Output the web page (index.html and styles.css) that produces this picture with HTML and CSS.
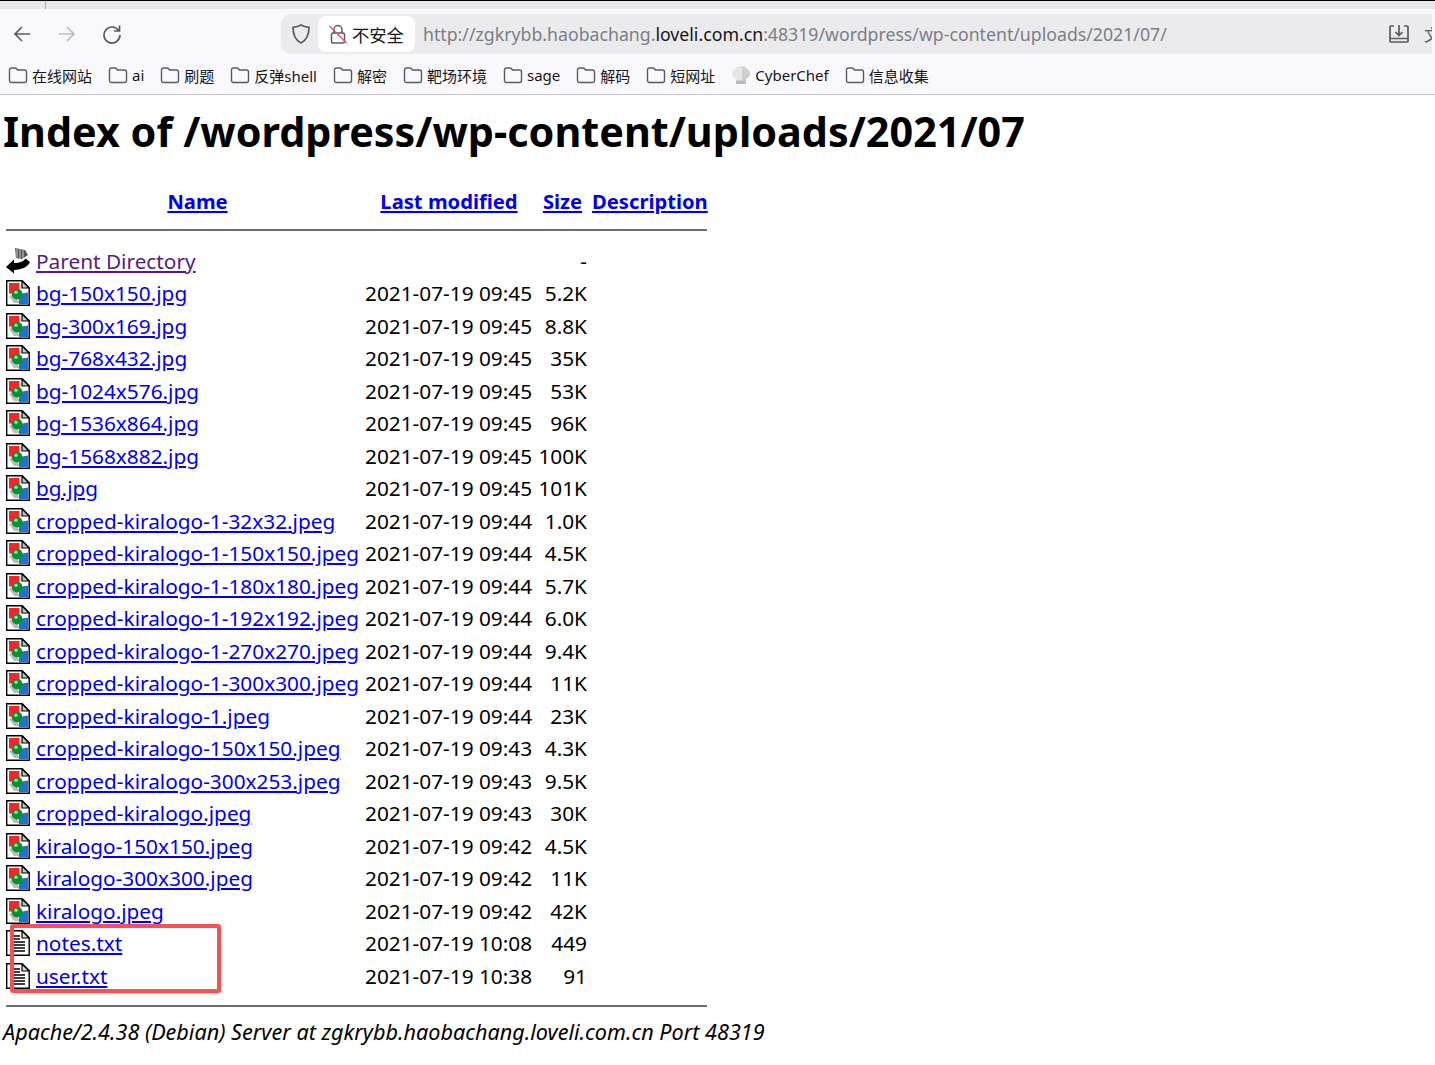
FILE: index.html
```html
<!DOCTYPE html>
<html lang="zh-CN">
<head>
<meta charset="utf-8">
<title>Index of /wordpress/wp-content/uploads/2021/07</title>
<link rel="stylesheet" href="styles.css">
</head>
<body>
<svg class="defs" width="0" height="0" aria-hidden="true">
  <symbol id="folder" viewBox="0 0 20 18"><path d="M1.500 4a2 2 0 0 1 2-2h3.600c.6 0 1 .2 1.400.7l1 1.300h7a2 2 0 0 1 2 2v8.500a2 2 0 0 1-2 2h-13a2 2 0 0 1-2-2z" fill="none" stroke="#5b5b66" stroke-width="1.400"/></symbol>
  <symbol id="img" viewBox="0 0 24 26">
    <path d="M.7.700h15.500l7 7v17.600H.7z" fill="#fff" stroke="#000" stroke-width="1.400"/>
    <path d="M16 1v7h7z" fill="#c8c8c8" stroke="#000" stroke-width="1.200"/>
    <path d="M3 3h10.500v10.500H3z" fill="#f22"/>
    <path d="M3 16l5 7h6l-6-9z" fill="#bbb"/>
    <path d="M13 14l9-1.500V24h-9z" fill="#1f74c8"/>
    <circle cx="11" cy="14" r="5.400" fill="#079030"/>
    <circle cx="10" cy="12.200" r="1.800" fill="#8fe0a8"/>
  </symbol>
  <symbol id="txt" viewBox="0 0 24 26">
    <path d="M.7.700h15.500l7 7v17.600H.7z" fill="#fff" stroke="#000" stroke-width="1.400"/>
    <path d="M16 1v7h7z" fill="#ddd" stroke="#000" stroke-width="1.200"/>
    <path d="M7 6h7M7 9h7M7 12h12M7 15h12M7 18h12M7 21h12" stroke="#000" stroke-width="1.500"/>
  </symbol>
  <symbol id="back" viewBox="4 1 28 28">
    <path d="M13 2l10 2 3 5-6 4-6-1z" fill="#555"/>
    <path d="M15 2.500v9M18 3v9.500M21 4v8" stroke="#ccc" stroke-width="1"/>
    <path d="M4 21l8-7.500v3.500c5 0 9-1 11.500-4.500L28 16c-2 5-8 7.500-16 8v3.500z" fill="#000"/>
  </symbol>
</svg>

<header class="chrome">
  <div class="tabstrip"><span class="tabsep"></span></div>
  <div class="toolbar">
    <div class="nav">
      <svg class="navicon" viewBox="0 0 20 20"><path d="M18 10H3M10 3l-7 7 7 7" fill="none" stroke="#5b5b66" stroke-width="1.700"/></svg>
      <svg class="navicon" viewBox="0 0 20 20"><path d="M2 10h15M10 3l7 7-7 7" fill="none" stroke="#bcbcc2" stroke-width="1.700"/></svg>
      <svg class="navicon" viewBox="0 0 20 20"><path d="M16.600 6.500A8 8 0 1 0 18 11M17.500 1.500v5.500H12" fill="none" stroke="#5b5b66" stroke-width="1.700"/></svg>
    </div>
    <div class="urlbar">
      <svg class="shield" viewBox="0 0 20 22"><path d="M10 2c2.500 1.500 5 2 8 2.300C18 12 16 17 10 20 4 17 2 12 2 4.300 5 4 7.500 3.500 10 2z" fill="none" stroke="#5b5b66" stroke-width="1.700"/></svg>
      <div class="secure">
        <svg class="lock" viewBox="0 0 18 20"><path d="M5 9V5.500a4 4 0 0 1 8 0V9M4 9h10a1.500 1.500 0 0 1 1.500 1.500v7A1.500 1.500 0 0 1 14 19H4a1.500 1.500 0 0 1-1.500-1.500v-7A1.500 1.500 0 0 1 4 9z" fill="none" stroke="#5b5b66" stroke-width="1.500"/><path d="M.5 2l17 17" stroke="#f0486e" stroke-width="1.500"/></svg>
        <span>不安全</span>
      </div>
      <div class="url">http://zgkrybb.haobachang.<b>loveli.com.cn</b>:48319/wordpress/wp-content/uploads/2021/07/</div>
      <svg class="saveicon" viewBox="0 0 22 20"><path d="M6 2H3a1 1 0 0 0-1 1v14a1 1 0 0 0 1 1h16a1 1 0 0 0 1-1V3a1 1 0 0 0-1-1h-3M2 14.500h18M11 1v10M7.500 8l3.500 3.500L14.500 8" fill="none" stroke="#5b5b66" stroke-width="1.700"/></svg>
      <span class="clipped">文</span>
    </div>
  </div>
  <nav class="bookmarks">
    <a class="bm"><svg class="fold"><use href="#folder"/></svg>在线网站</a>
    <a class="bm"><svg class="fold"><use href="#folder"/></svg>ai</a>
    <a class="bm"><svg class="fold"><use href="#folder"/></svg>刷题</a>
    <a class="bm"><svg class="fold"><use href="#folder"/></svg>反弹shell</a>
    <a class="bm"><svg class="fold"><use href="#folder"/></svg>解密</a>
    <a class="bm"><svg class="fold"><use href="#folder"/></svg>靶场环境</a>
    <a class="bm"><svg class="fold"><use href="#folder"/></svg>sage</a>
    <a class="bm"><svg class="fold"><use href="#folder"/></svg>解码</a>
    <a class="bm"><svg class="fold"><use href="#folder"/></svg>短网址</a>
    <a class="bm"><svg class="chef" viewBox="0 0 20 20"><path d="M5 14C0 12 0 6 4 4c2-4 10-4 12 0 4 2 4 8-1 10v5H5z" fill="#e6e6e6"/><path d="M11 1.500c3 0 4 1 5 2.500 4 2 4 8-1 10v5h-4z" fill="#cfcfcf"/><path d="M5 15.500h10V19H5z" fill="#bdbdbd"/></svg>CyberChef</a>
    <a class="bm"><svg class="fold"><use href="#folder"/></svg>信息收集</a>
  </nav>
</header>

<main class="page">
  <h1>Index of /wordpress/wp-content/uploads/2021/07</h1>
  <table class="listing">
    <thead>
      <tr class="head">
        <th class="c-icon"></th>
        <th class="c-name"><a href="#">Name</a></th>
        <th class="c-date"><a href="#">Last modified</a></th>
        <th class="c-size"><a href="#">Size</a></th>
        <th class="c-desc"><a href="#">Description</a></th>
      </tr>
      <tr class="rule"><th colspan="5"><hr></th></tr>
    </thead>
    <tbody>
      <tr><td><svg class="ico-back"><use href="#back"/></svg></td><td><a class="up" href="#">Parent Directory</a></td><td></td><td class="sz">-</td><td></td></tr>
      <tr><td><svg class="ico"><use href="#img"/></svg></td><td><a href="#">bg-150x150.jpg</a></td><td>2021-07-19 09:45</td><td class="sz">5.2K</td><td></td></tr>
      <tr><td><svg class="ico"><use href="#img"/></svg></td><td><a href="#">bg-300x169.jpg</a></td><td>2021-07-19 09:45</td><td class="sz">8.8K</td><td></td></tr>
      <tr><td><svg class="ico"><use href="#img"/></svg></td><td><a href="#">bg-768x432.jpg</a></td><td>2021-07-19 09:45</td><td class="sz">35K</td><td></td></tr>
      <tr><td><svg class="ico"><use href="#img"/></svg></td><td><a href="#">bg-1024x576.jpg</a></td><td>2021-07-19 09:45</td><td class="sz">53K</td><td></td></tr>
      <tr><td><svg class="ico"><use href="#img"/></svg></td><td><a href="#">bg-1536x864.jpg</a></td><td>2021-07-19 09:45</td><td class="sz">96K</td><td></td></tr>
      <tr><td><svg class="ico"><use href="#img"/></svg></td><td><a href="#">bg-1568x882.jpg</a></td><td>2021-07-19 09:45</td><td class="sz">100K</td><td></td></tr>
      <tr><td><svg class="ico"><use href="#img"/></svg></td><td><a href="#">bg.jpg</a></td><td>2021-07-19 09:45</td><td class="sz">101K</td><td></td></tr>
      <tr><td><svg class="ico"><use href="#img"/></svg></td><td><a href="#">cropped-kiralogo-1-32x32.jpeg</a></td><td>2021-07-19 09:44</td><td class="sz">1.0K</td><td></td></tr>
      <tr><td><svg class="ico"><use href="#img"/></svg></td><td><a href="#">cropped-kiralogo-1-150x150.jpeg</a></td><td>2021-07-19 09:44</td><td class="sz">4.5K</td><td></td></tr>
      <tr><td><svg class="ico"><use href="#img"/></svg></td><td><a href="#">cropped-kiralogo-1-180x180.jpeg</a></td><td>2021-07-19 09:44</td><td class="sz">5.7K</td><td></td></tr>
      <tr><td><svg class="ico"><use href="#img"/></svg></td><td><a href="#">cropped-kiralogo-1-192x192.jpeg</a></td><td>2021-07-19 09:44</td><td class="sz">6.0K</td><td></td></tr>
      <tr><td><svg class="ico"><use href="#img"/></svg></td><td><a href="#">cropped-kiralogo-1-270x270.jpeg</a></td><td>2021-07-19 09:44</td><td class="sz">9.4K</td><td></td></tr>
      <tr><td><svg class="ico"><use href="#img"/></svg></td><td><a href="#">cropped-kiralogo-1-300x300.jpeg</a></td><td>2021-07-19 09:44</td><td class="sz">11K</td><td></td></tr>
      <tr><td><svg class="ico"><use href="#img"/></svg></td><td><a href="#">cropped-kiralogo-1.jpeg</a></td><td>2021-07-19 09:44</td><td class="sz">23K</td><td></td></tr>
      <tr><td><svg class="ico"><use href="#img"/></svg></td><td><a href="#">cropped-kiralogo-150x150.jpeg</a></td><td>2021-07-19 09:43</td><td class="sz">4.3K</td><td></td></tr>
      <tr><td><svg class="ico"><use href="#img"/></svg></td><td><a href="#">cropped-kiralogo-300x253.jpeg</a></td><td>2021-07-19 09:43</td><td class="sz">9.5K</td><td></td></tr>
      <tr><td><svg class="ico"><use href="#img"/></svg></td><td><a href="#">cropped-kiralogo.jpeg</a></td><td>2021-07-19 09:43</td><td class="sz">30K</td><td></td></tr>
      <tr><td><svg class="ico"><use href="#img"/></svg></td><td><a href="#">kiralogo-150x150.jpeg</a></td><td>2021-07-19 09:42</td><td class="sz">4.5K</td><td></td></tr>
      <tr><td><svg class="ico"><use href="#img"/></svg></td><td><a href="#">kiralogo-300x300.jpeg</a></td><td>2021-07-19 09:42</td><td class="sz">11K</td><td></td></tr>
      <tr><td><svg class="ico"><use href="#img"/></svg></td><td><a href="#">kiralogo.jpeg</a></td><td>2021-07-19 09:42</td><td class="sz">42K</td><td></td></tr>
      <tr><td><svg class="ico"><use href="#txt"/></svg></td><td><a href="#">notes.txt</a></td><td>2021-07-19 10:08</td><td class="sz">449</td><td></td></tr>
      <tr><td><svg class="ico"><use href="#txt"/></svg></td><td><a href="#">user.txt</a></td><td>2021-07-19 10:38</td><td class="sz">91</td><td></td></tr>
      <tr class="rule"><td colspan="5"><hr></td></tr>
    </tbody>
  </table>
  <address>Apache/2.4.38 (Debian) Server at zgkrybb.haobachang.loveli.com.cn Port 48319</address>
  <div class="highlight"></div>
</main>
</body>
</html>
```

FILE: styles.css
```css
* { box-sizing: border-box; }
html, body { margin: 0; padding: 0; background: #fff; }
body { font-family: "Noto Sans", "Noto Sans CJK SC", sans-serif; color: #000; height: 1065px; overflow: hidden; }
.defs { position: absolute; }

.chrome { height: 95px; background: #f9f9fb; border-bottom: 1px solid #ccccd0; }
.tabstrip { height: 9px; background: #e8e8ea; border-top: 1px solid #000; padding-left: 45px; }
.tabsep { display: block; width: 1px; height: 8px; background: #aaa; }
.toolbar { display: flex; height: 45px; padding-top: 5px; align-items: stretch; }
.nav { display: flex; width: 281px; align-items: center; padding-left: 12px; gap: 25px; }
.navicon { width: 20px; height: 20px; }
.urlbar { flex: 1; margin-right: 3px; height: 40px; background: #ebebed; border-radius: 10px 0 0 10px; display: flex; align-items: center; padding-left: 10px; position: relative; overflow: hidden; }
.shield { width: 20px; height: 22px; flex: none; }
.secure { margin-left: 7px; width: 97px; height: 36px; background: #fff; border-radius: 8px; display: flex; align-items: center; padding-left: 11px; gap: 5px; font-size: 17.300px; color: #15141a; flex: none; }
.lock { width: 18px; height: 20px; flex: none; }
.url { margin-left: 8px; font-size: 17.720px; color: #7d7d85; white-space: nowrap; flex: 1; }
.url b { font-weight: 400; color: #15141a; }
.saveicon { width: 22px; height: 20px; flex: none; margin-right: 14px; }
.clipped { width: 8px; flex: none; overflow: hidden; font-size: 16px; color: #5b5b66; white-space: nowrap; }

.bookmarks { display: flex; height: 40px; padding: 2px 0 0 8px; align-items: center; font-size: 15px; color: #15141a; gap: 16px; }
.bm { display: flex; align-items: center; gap: 4px; white-space: nowrap; }
.fold { width: 20px; height: 18px; flex: none; }
.chef { width: 20px; height: 20px; flex: none; }

.page { position: relative; padding-left: 3px; }
h1 { margin: 0; padding-top: 5px; font-size: 41.350px; line-height: 62px; font-weight: 700; white-space: nowrap; }

.listing { border-collapse: collapse; table-layout: fixed; width: 701px; margin: 21.400px 0 0 3px; font-size: 20.800px; }
.listing a { color: #0000ee; text-decoration: underline; }
.listing a.up { color: #551a8b; }
.head th { height: 36px; padding: 0; font-size: 20.200px; font-weight: 700; text-align: center; white-space: nowrap; }
.c-icon { width: 30px; }
.head .c-name { width: 329px; padding-right: 6px; }
.head .c-date { width: 173px; padding-right: 5px; }
.head .c-size { width: 54px; padding-right: 5px; }
.c-desc { width: 115px; }
.rule th, .rule td { padding: 0; height: auto; }
thead .rule th { height: 25px; vertical-align: top; padding-top: 10px; }
hr { margin: 0; height: 2px; border: 0; background: #6e6e6e; display: block; }
.listing tbody tr { height: 32.500px; }
.listing tbody td { padding: 0; white-space: nowrap; overflow: visible; vertical-align: middle; }
.listing tbody td:first-child { line-height: 0; }
.listing tbody .sz { text-align: right; padding-right: 5px; }
.ico { width: 24px; height: 26px; display: block; }
.ico-back { width: 28px; height: 28px; display: block; }
.listing tbody .rule { height: 15px; }
.listing tbody .rule td { vertical-align: bottom; }

address { font-style: italic; font-size: 21.600px; margin-top: 10px; white-space: nowrap; }

.highlight { position: absolute; left: 10px; top: 829px; width: 211px; height: 69px; border: 4px solid #f55353; border-radius: 3px; }
```
